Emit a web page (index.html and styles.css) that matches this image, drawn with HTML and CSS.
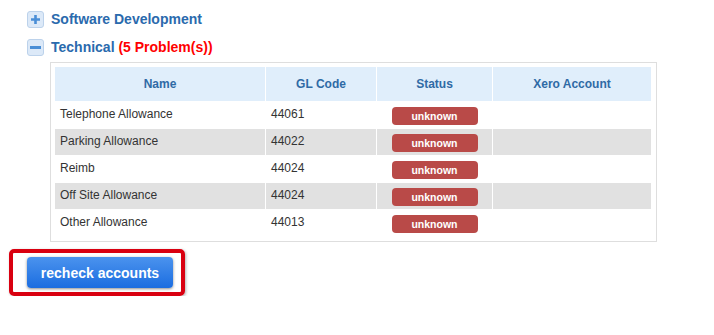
FILE: index.html
```html
<!DOCTYPE html>
<html lang="en">
<head>
    <meta charset="UTF-8">
    <meta name="viewport" content="width=device-width, initial-scale=1.0">
    <title>Account Check</title>
    <link rel="stylesheet" href="styles.css">
</head>
<body>

<ul class="grupos">
    <li class="grupo">
        <div class="grupo-cabecera">
            <span class="toggle">
                <svg width="17" height="17" viewBox="0 0 17 17"><path d="M8.5 4v9M4 8.5h9" stroke="#4a8ed6" stroke-width="2.6"/></svg>
            </span>
            <span class="grupo-nombre">Software Development</span>
        </div>
    </li>
    <li class="grupo abierto">
        <div class="grupo-cabecera">
            <span class="toggle">
                <svg width="17" height="17" viewBox="0 0 17 17"><path d="M3 8.5h11" stroke="#4a8ed6" stroke-width="3"/></svg>
            </span>
            <span class="grupo-nombre">Technical <span class="problemas">(5 Problem(s))</span></span>
        </div>
        <div class="panel">
            <table class="cuentas">
                <colgroup>
                    <col class="col-nombre">
                    <col class="col-codigo">
                    <col class="col-estado">
                    <col class="col-xero">
                </colgroup>
                <thead>
                    <tr>
                        <th>Name</th>
                        <th>GL Code</th>
                        <th>Status</th>
                        <th>Xero Account</th>
                    </tr>
                </thead>
                <tbody>
                    <tr>
                        <td>Telephone Allowance</td>
                        <td>44061</td>
                        <td class="estado"><span class="etiqueta">unknown</span></td>
                        <td></td>
                    </tr>
                    <tr>
                        <td>Parking Allowance</td>
                        <td>44022</td>
                        <td class="estado"><span class="etiqueta">unknown</span></td>
                        <td></td>
                    </tr>
                    <tr>
                        <td>Reimb</td>
                        <td>44024</td>
                        <td class="estado"><span class="etiqueta">unknown</span></td>
                        <td></td>
                    </tr>
                    <tr>
                        <td>Off Site Allowance</td>
                        <td>44024</td>
                        <td class="estado"><span class="etiqueta">unknown</span></td>
                        <td></td>
                    </tr>
                    <tr>
                        <td>Other Allowance</td>
                        <td>44013</td>
                        <td class="estado"><span class="etiqueta">unknown</span></td>
                        <td></td>
                    </tr>
                </tbody>
            </table>
        </div>
    </li>
</ul>

<div class="acciones">
    <div class="marco">
        <button class="boton-recheck">recheck accounts</button>
    </div>
</div>

</body>
</html>
```

FILE: styles.css
```css
body {
    font-family: "Liberation Sans", Arial, sans-serif;
    margin: 0;
    background-color: #fff;
    color: #333;
}
.grupos {
    list-style: none;
    margin: 5px 0 0 0;
    padding: 0 0 0 27px;
}
.grupo-cabecera {
    display: flex;
    align-items: center;
    gap: 7px;
    height: 28px;
}
.toggle {
    display: block;
    width: 17px;
    height: 17px;
    box-sizing: border-box;
    background-color: #dce9f8;
    border: 1px solid #bcd2eb;
    border-radius: 3px;
}
.toggle svg {
    display: block;
    margin: -1px;
}
.grupo-nombre {
    font-size: 14px;
    font-weight: bold;
    color: #2a6aad;
}
.problemas {
    color: #f00;
}
.panel {
    width: 607px;
    box-sizing: border-box;
    margin: 1px 0 0 23px;
    padding: 3px 3px 4px 4px;
    border: 1px solid #dedede;
}
.cuentas {
    width: 100%;
    border-collapse: separate;
    border-spacing: 1px;
    margin: 0 -1px;
    font-size: 12px;
}
.col-nombre { width: 210px; }
.col-codigo { width: 110px; }
.col-estado { width: 115px; }
.cuentas th {
    height: 34px;
    padding: 0;
    background-color: #e0eefb;
    color: #2f6aa5;
    font-weight: bold;
    text-align: center;
}
.cuentas td {
    height: 26px;
    box-sizing: border-box;
    padding: 3px 5px 0;
    vertical-align: top;
    line-height: 18px;
}
.cuentas tbody tr:nth-child(even) td {
    background-color: #e1e1e1;
}
.estado {
    text-align: center;
}
.etiqueta {
    display: inline-block;
    width: 86px;
    height: 18px;
    margin-top: 2px;
    line-height: 18px;
    border-radius: 4px;
    background-color: #b94a48;
    color: #fff;
    font-size: 10.5px;
    font-weight: bold;
    vertical-align: top;
}
.acciones {
    padding: 7px 0 0 9px;
}
.marco {
    display: inline-block;
    padding: 4px 8px 4px 14px;
    border: 4px solid #d90010;
    border-radius: 5px;
    box-shadow: 1px 1px 3px rgba(0, 0, 0, 0.3);
}
.boton-recheck {
    display: block;
    width: 146px;
    height: 31px;
    padding: 0;
    background: linear-gradient(#4b93ee, #1b6de0);
    color: #fff;
    border: none;
    border-radius: 4px;
    box-shadow: 0 1px 3px rgba(0, 0, 0, 0.45);
    font-family: "Liberation Sans", Arial, sans-serif;
    font-size: 14px;
    font-weight: bold;
    cursor: pointer;
}
```
